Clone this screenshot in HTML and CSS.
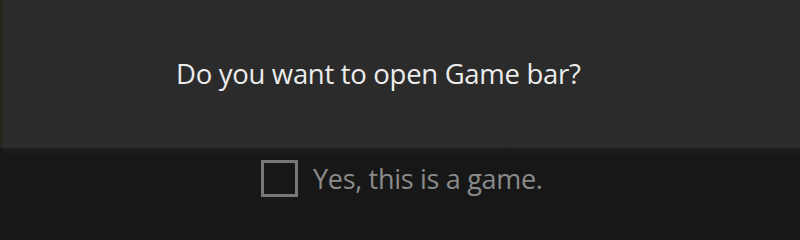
FILE: index.html
```html
<!DOCTYPE html>
<html>
<head>
<meta charset="utf-8">
<link rel="stylesheet" href="styles.css">
</head>
<body>
<div class="dialog">
  <div class="prompt">
    <p class="question">Do you want to open Game bar?</p>
  </div>
  <div class="footer">
    <label class="check">
      <span class="box"></span>
      <span class="check-label">Yes, this is a game.</span>
    </label>
  </div>
</div>
</body>
</html>
```
FILE: styles.css
```css
html, body {
  margin: 0;
  padding: 0;
  background: #171717;
}
.dialog {
  width: 800px;
  height: 209px;
  display: flex;
  flex-direction: column;
  font-family: "Open Sans", "Noto Sans", sans-serif;
}
.prompt {
  height: 148px;
  background: #2b2b2b;
  border-left: 3px solid #27271f;
  display: flex;
  align-items: center;
  padding-left: 173px;
}
.question {
  margin: 0;
  color: #ececec;
  font-size: 27.5px;
  letter-spacing: -0.3px;
  line-height: 1;
}
.footer {
  flex: 1;
  background: linear-gradient(#1e1e1e, #171717 8px);
  border-left: 3px solid #15181a;
  display: flex;
  align-items: center;
  padding-left: 258px;
}
.check {
  display: flex;
  align-items: center;
  gap: 15px;
}
.box {
  width: 37px;
  height: 37px;
  box-sizing: border-box;
  border: 3px solid #777777;
}
.check-label {
  color: #8a8a8a;
  font-size: 27px;
  letter-spacing: -0.3px;
  line-height: 1;
}
```
